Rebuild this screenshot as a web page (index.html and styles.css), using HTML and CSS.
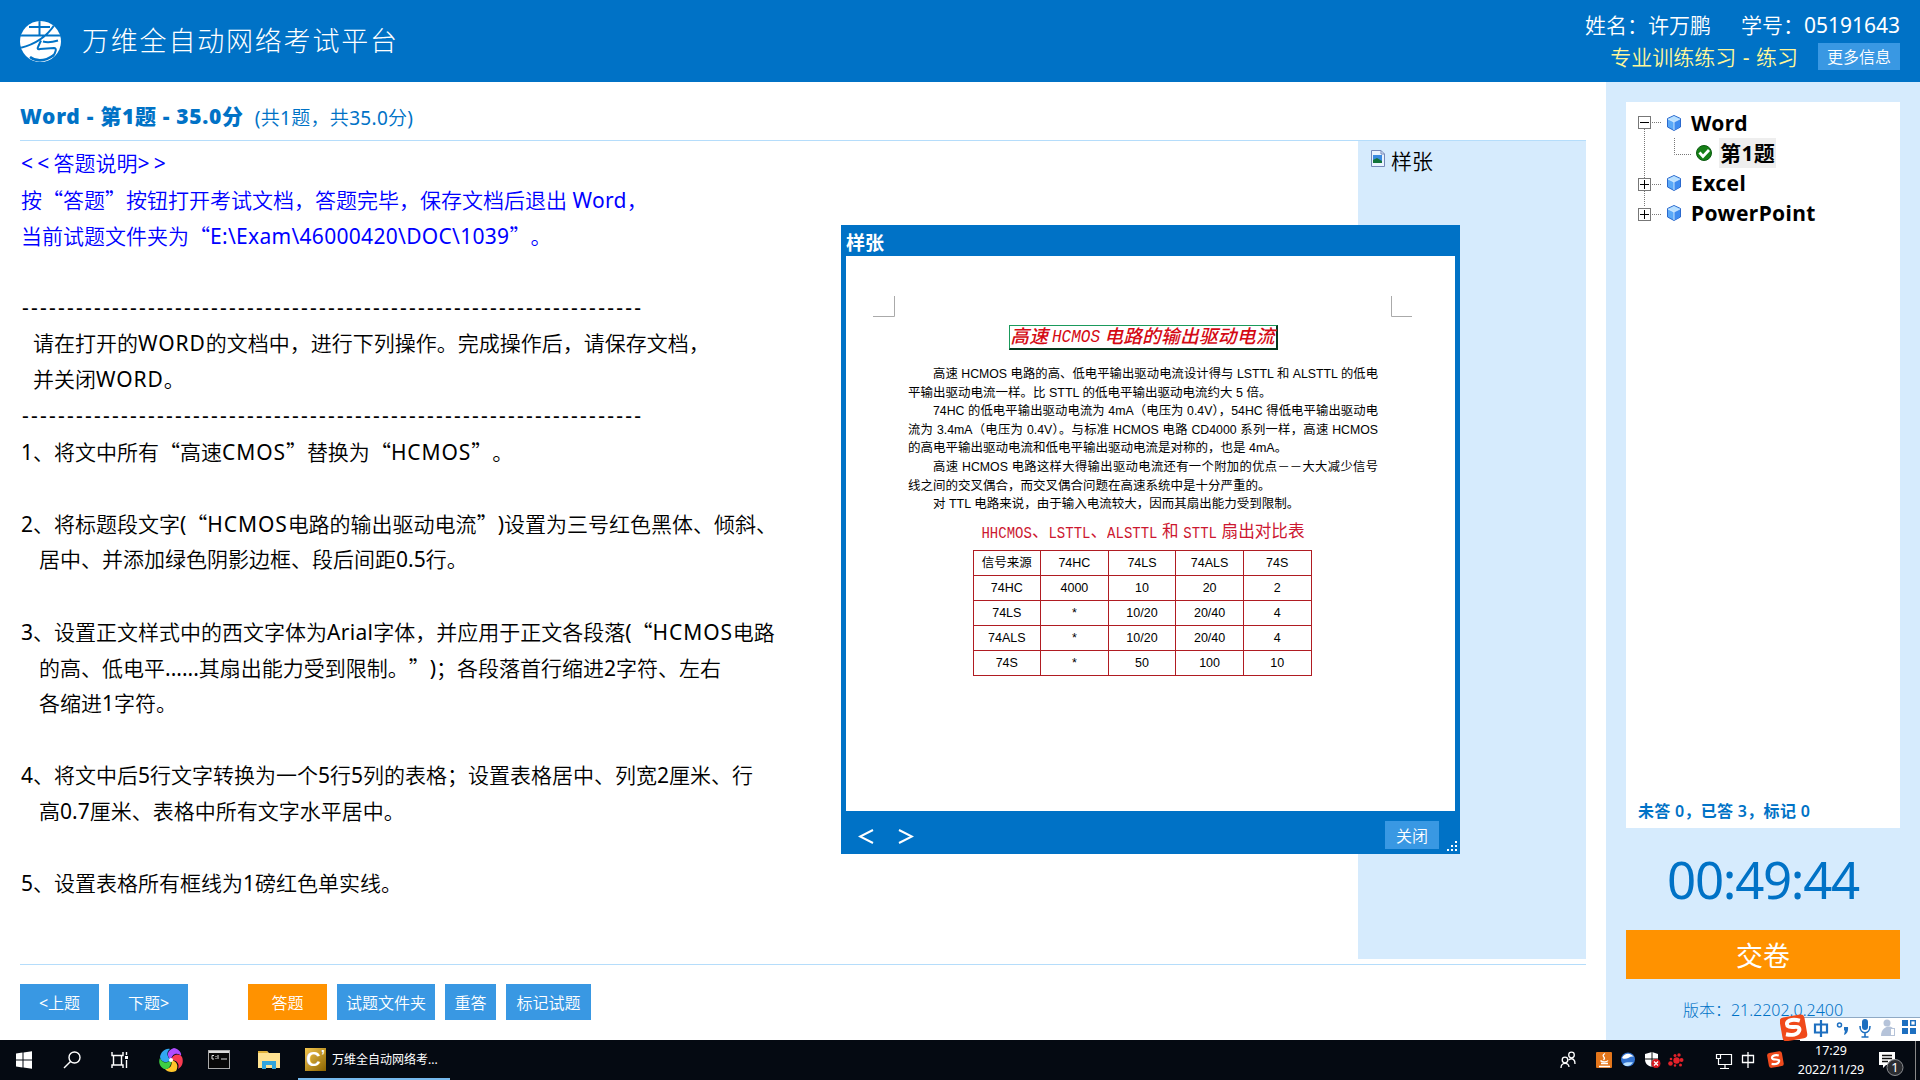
FILE: index.html
```html
<!DOCTYPE html>
<html lang="zh-CN">
<head>
<meta charset="utf-8">
<title>万维全自动网络考试平台</title>
<link rel="stylesheet" href="styles.css">
</head>
<body>
<header class="top">
  <svg class="logo" viewBox="0 0 41 41">
    <defs><clipPath id="disc"><circle cx="20.500" cy="20.500" r="20.500"/></clipPath></defs>
    <g clip-path="url(#disc)">
      <rect width="41" height="41" fill="#fff"/>
      <g fill="none" stroke="#0072c6" stroke-width="2">
        <path d="M9 6H30M0 14.500H41M19.500 0V14M35 3C28 14 17 23 0 27"/>
        <path d="M21 19.500L18 26C17 28 18 28.500 20 28L34 27C37 27 36 31 33 35M23 20.500C28 22 33 21 38 19.500"/>
        <path d="M10 36C18 42 27 39 34 34" stroke-width="2.600"/>
      </g>
    </g>
  </svg>
  <h1 class="brand">万维全自动网络考试平台</h1>
  <div class="who">
    <div class="who-row"><span>姓名：许万鹏</span><span>学号：05191643</span></div>
    <div class="who-row exam"><span>专业训练练习 - 练习</span><button class="more">更多信息</button></div>
  </div>
</header>

<div class="body">
  <main class="main">
    <h2 class="heading"><b>Word - 第1题 - 35.0分</b><span>(共1题，共35.0分)</span></h2>
    <section class="work">
      <div class="question">
        <p class="blue"><span class="angle">&lt;&lt;</span>答题说明<span class="angle">&gt;&gt;</span></p>
        <p class="blue">按<i>“</i>答题<i>”</i>按钮打开考试文档，答题完毕，保存文档后退出 <span class="path">Word</span>，</p>
        <p class="blue">当前试题文件夹为<i>“</i><span class="path">E:\Exam\46000420\DOC\1039</span><i>”</i>。</p>
        <p></p>
        <p class="dash">---------------------------------------------------------------------</p>
        <p class="in1">请在打开的<span class="caps">WORD</span>的文档中，进行下列操作。完成操作后，请保存文档，</p>
        <p class="in1">并关闭<span class="caps">WORD</span>。</p>
        <p class="dash">---------------------------------------------------------------------</p>
        <p>1、将文中所有<i>“</i>高速<span class="caps">CMOS</span><i>”</i>替换为<i>“</i><span class="caps">HCMOS</span><i>”</i>。</p>
        <p></p>
        <p>2、将标题段文字(<i>“</i><span class="caps">HCMOS</span>电路的输出驱动电流<i>”</i>)设置为三号红色黑体、倾斜、</p>
        <p class="in2">居中、并添加绿色阴影边框、段后间距0.5行。</p>
        <p></p>
        <p>3、设置正文样式中的西文字体为<span class="path">Arial</span>字体，并应用于正文各段落(<i>“</i><span class="caps">HCMOS</span>电路</p>
        <p class="in2">的高、低电平......其扇出能力受到限制。<i>”</i>)；各段落首行缩进2字符、左右</p>
        <p class="in2">各缩进1字符。</p>
        <p></p>
        <p>4、将文中后5行文字转换为一个5行5列的表格；设置表格居中、列宽2厘米、行</p>
        <p class="in2">高0.7厘米、表格中所有文字水平居中。</p>
        <p></p>
        <p>5、设置表格所有框线为1磅红色单实线。</p>
      </div>
      <aside class="sample">
        <svg width="14" height="17" viewBox="0 0 14 17"><path d="M.5.500H10L13.500 4V16.500H.5Z" fill="#eaf3ff" stroke="#7488b8"/><rect x="2" y="5" width="9" height="8" fill="#3b8be0"/><path d="M2 13V10L6 8L11 11V13Z" fill="#12733a"/><path d="M10 .5V4H13.500" fill="none" stroke="#7488b8"/></svg>
        <span>样张</span>
      </aside>
    </section>
    <footer class="actions">
      <button class="w80">&lt;上题</button><button class="w80">下题&gt;</button>
      <button class="w80 go">答题</button><button class="w98">试题文件夹</button><button class="w51">重答</button><button class="w85">标记试题</button>
    </footer>
  </main>

  <aside class="side">
    <div class="tree">
      <svg class="tree-lines" width="60" height="120" viewBox="0 0 60 120">
        <g stroke="#777" stroke-dasharray="1 1" fill="none"><path d="M6.500 27V105M14 20.500H23M36.500 36V52.500H53M14 82.500H23M14 112.500H23"/></g>
        <g fill="#fff" stroke="#777"><rect x=".5" y="14.500" width="12" height="12"/><rect x=".5" y="76.500" width="12" height="12"/><rect x=".5" y="106.500" width="12" height="12"/></g>
        <path d="M2 20.500H11M2 82.500H11M6.500 78V87M2 112.500H11M6.500 108V117" stroke="#000"/>
      </svg>
      <ul>
        <li><svg class="cube" viewBox="0 0 14 16"><use href="#cube"/></svg>Word</li>
        <li class="child"><svg class="tick" viewBox="0 0 16 16"><circle cx="8" cy="8" r="7.500" fill="#168016" stroke="#0a5a10"/><path d="M3.500 7.500L7 11.500L13 5" fill="none" stroke="#fff" stroke-width="2.800"/></svg><span class="sel">第1题</span></li>
        <li><svg class="cube" viewBox="0 0 14 16"><use href="#cube"/></svg>Excel</li>
        <li><svg class="cube" viewBox="0 0 14 16"><use href="#cube"/></svg>PowerPoint</li>
      </ul>
      <p class="counts">未答 0，已答 3，标记 0</p>
    </div>
    <div class="timer">00:49:44</div>
    <button class="submit">交卷</button>
    <p class="version">版本：21.2202.0.2400</p>
  </aside>
</div>

<nav class="taskbar">
  <svg class="tb-left" width="290" height="40" viewBox="0 0 290 40">
    <path d="M16 13.500L22.500 12.600V19.500H16ZM23.500 12.500L32 11.300V19.500H23.500ZM16 20.500H22.500V27.400L16 26.500ZM23.500 20.500H32V28.700L23.500 27.500Z" fill="#fff"/>
    <g fill="none" stroke="#fff" stroke-width="1.400"><circle cx="74.500" cy="17.500" r="5.500"/><path d="M70.500 21.500L64 28"/><path d="M112 12V15.500H123V12M112 28V25H123V28M113.500 15.500V25M121.500 15.500V25M126.500 12V15M126.500 20V28"/></g>
    <rect x="125" y="16" width="3" height="3" fill="#fff"/>
    <g transform="translate(171 20)">
      <path d="M0 0C-5 -4 -4 -10 3 -12C8 -11 11 -7 10 -4C7 -8 1 -7 0 0Z" fill="#b04dff"/>
      <path d="M0 0C2 -6 8 -7 11 -3C13 2 11 7 7 9C9 4 6 0 0 0Z" fill="#fa3b51"/>
      <path d="M0 0C6 1 8 6 5 11C1 13 -4 12 -6 9C-1 9 2 5 0 0Z" fill="#ffc62a"/>
      <path d="M0 0C1 6 -3 10 -7 9C-11 7 -13 2 -11 -2C-9 3 -4 4 0 0Z" fill="#3ecf43"/>
      <path d="M0 0C-5 4 -10 2 -11 -3C-10 -8 -6 -12 -1 -11C-5 -8 -4 -3 0 0Z" fill="#32a7f2"/>
      <circle r="2" fill="#fff"/></g>
    <rect x="208.500" y="10.500" width="21" height="18" fill="#080808" stroke="#aaa"/><path d="M209 12H229" stroke="#ddd" stroke-width="2"/><path d="M214 15.500H212V19H214M216 16V17M216 18V19M218 15V19M221 19H227" stroke="#ddd" fill="none"/>
    <path d="M258 11H267L269 13H280V28H258Z" fill="#ffe291"/><path d="M258 11H267L268 13H258Z" fill="#e0b13a"/><path d="M262 29V21H276V29H272V25H266V29Z" fill="#32a5dd"/>
  </svg>
  <div class="task">
    <span class="app">C<sup>’</sup></span>
    <span>万维全自动网络考...</span>
  </div>
  <svg class="tray" width="237" height="40" viewBox="0 0 237 40">
    <g fill="none" stroke="#fff" stroke-width="1.300"><circle cx="15" cy="20" r="2.800"/><circle cx="21.500" cy="15" r="2.800"/><path d="M11 28C11 22 19 22 19 27M18.500 20C23 17 25 20 25 24"/></g>
    <rect x="46" y="12" width="16" height="16" rx="1" fill="#e4761b"/><path d="M55 13.500C50 16.500 57 17 53.500 20M50.500 20.500C52 22.500 57 22 58 20.500M51 23.500H58M49 26.500H60" stroke="#fff" fill="none" stroke-width="1.300"/>
    <circle cx="78" cy="19.500" r="7" fill="#3272cf"/><path d="M72 18C75 12 81 13 84 17C80 15 77 21 72 18Z" fill="#fff"/><path d="M73 24C77 21 81 23 83 22C81 27 75 27 73 24Z" fill="#b7dfff"/>
    <path d="M102 13L108 15V20C108 25 105 27 102 28C98 27 95 25 95 20V15Z" fill="#fff" transform="translate(0 -1)"/><path d="M102 12V27M95 19H108" stroke="#111"/><circle cx="106" cy="23.500" r="4.500" fill="#d71920"/><path d="M104 21.500L108 25.500M108 21.500L104 25.500" stroke="#fff" stroke-width="1.300"/>
    <g fill="#e3222a"><circle cx="126.500" cy="20.500" r="3.200"/><circle cx="120.500" cy="23.500" r="2.300"/><circle cx="125" cy="15.500" r="1.500"/><circle cx="129" cy="15" r="1.700"/><circle cx="131.500" cy="20" r="2"/><circle cx="130.500" cy="25" r="1.500"/><circle cx="121" cy="19" r="1.300"/><circle cx="125" cy="25.500" r="1.200"/></g>
    <path d="M171 14.500H181.500V24.500H168.500V19M175 25V28M170 28.500H179M166.500 14.500H170.500V18.500H166.500Z" fill="none" stroke="#fff" stroke-width="1.200"/>
    <path d="M192.500 15.500H203.500V22.500H192.500ZM198 12V28" fill="none" stroke="#fff" stroke-width="1.300"/>
    <g transform="translate(218 12) rotate(-10 8 8)"><rect width="15" height="15" rx="2.500" fill="#f04a1d"/><path d="M11.500 4C7 2 3 4 5 6.500C7 8 11 7 11 9.500C10 12.500 6 12 3 11" fill="none" stroke="#fff" stroke-width="2.200"/></g>
  </svg>
  <div class="clock"><span>17:29</span><span>2022/11/29</span></div>
  <svg class="notice" width="41" height="40" viewBox="0 0 41 40"><path d="M4 12H20V25H11L8 28V25H4Z" fill="#fff"/><path d="M7 15.500H17M7 18.500H17M7 21.500H13" stroke="#111" stroke-width="1.300"/><circle cx="20" cy="27.500" r="8" fill="#2b2d31" stroke="#8b8d91"/><text x="20" y="32" text-anchor="middle" class="badge">1</text><path d="M40.500 0V40" stroke="#888"/></svg>
</nav>

<section class="dialog">
  <h3>样张</h3>
  <div class="paper">
    <svg class="crops" width="540" height="22" viewBox="0 0 540 22"><path d="M21.500 0V20.500H0M518.500 0V20.500H539" fill="none" stroke="#aaa"/></svg>
    <h4>高速<span class="mono">HCMOS</span>电路的输出驱动电流</h4>
    <div class="text">
      <p class="first full">高速 HCMOS 电路的高、低电平输出驱动电流设计得与 LSTTL 和 ALSTTL 的低电</p>
      <p>平输出驱动电流一样。比 STTL 的低电平输出驱动电流约大 5 倍。</p>
      <p class="first full">74HC 的低电平输出驱动电流为 4mA（电压为 0.4V），54HC 得低电平输出驱动电</p>
      <p class="full">流为 3.4mA（电压为 0.4V）。与标准 HCMOS 电路 CD4000 系列一样，高速 HCMOS</p>
      <p>的高电平输出驱动电流和低电平输出驱动电流是对称的，也是 4mA。</p>
      <p class="first full">高速 HCMOS 电路这样大得输出驱动电流还有一个附加的优点－－大大减少信号</p>
      <p>线之间的交叉偶合，而交叉偶合问题在高速系统中是十分严重的。</p>
      <p class="first">对 TTL 电路来说，由于输入电流较大，因而其扇出能力受到限制。</p>
    </div>
    <p class="caption"><span>HHCMOS</span>、<span>LSTTL</span>、<span>ALSTTL</span> 和 <span>STTL</span> 扇出对比表</p>
    <table>
      <tr><td>信号来源</td><td>74HC</td><td>74LS</td><td>74ALS</td><td>74S</td></tr>
      <tr><td>74HC</td><td>4000</td><td>10</td><td>20</td><td>2</td></tr>
      <tr><td>74LS</td><td>*</td><td>10/20</td><td>20/40</td><td>4</td></tr>
      <tr><td>74ALS</td><td>*</td><td>10/20</td><td>20/40</td><td>4</td></tr>
      <tr><td>74S</td><td>*</td><td>50</td><td>100</td><td>10</td></tr>
    </table>
  </div>
  <div class="dialog-foot">
    <svg width="56" height="15" viewBox="0 0 56 15"><path d="M15 1L2 7.500L15 14M41 1L54 7.500L41 14" fill="none" stroke="#fff" stroke-width="2"/></svg>
    <button>关闭</button>
  </div>
  <svg class="grip" width="10" height="10" viewBox="0 0 10 10"><path d="M8 0h2v2h-2zM4 4h2v2h-2zM8 4h2v2h-2zM0 8h2v2h-2zM4 8h2v2h-2zM8 8h2v2h-2z" fill="#fff"/></svg>
</section>

<div class="ime">
  <svg width="140" height="27" viewBox="0 0 140 27">
    <path d="M20 3.500H140V27H20Z" fill="#fff"/><path d="M20 3.500H140" stroke="#8fa9c4"/>
    <g transform="rotate(-10 13 14)"><rect x="1" y="2" width="25" height="24" rx="4" fill="#f0491a"/><path d="M21 8C13 4 6 6 8 11C11 15 20 11 19 17C17 22 10 21 5 19" fill="none" stroke="#fff" stroke-width="4"/></g>
    <path d="M35 10.500H47V18.500H35ZM41 6V23" fill="none" stroke="#1d6fc0" stroke-width="2.200"/>
    <circle cx="59.500" cy="11" r="2" fill="none" stroke="#1d6fc0" stroke-width="1.500"/><path d="M64 13H68C68.500 17 67 20 64 21L65 16.500H64Z" fill="#1d6fc0"/>
    <rect x="82" y="5" width="6" height="11" rx="3" fill="#1d6fc0"/><path d="M80 12C80 21 90 21 90 12M85 19V23M81.500 23H88.500" fill="none" stroke="#1d6fc0" stroke-width="1.600"/>
    <circle cx="107" cy="9" r="3.500" fill="#b5c3d9"/><path d="M101 22C101 11 113 11 113 15V22Z" fill="#b5c3d9"/><rect x="110.500" y="14.500" width="4" height="7" fill="#fff" stroke="#b5c3d9"/>
    <path d="M122 6h6v6h-6zM122 14h6v6h-6zM130 14h6v6h-6z" fill="#1d6fc0"/><rect x="130.700" y="6.700" width="4.600" height="4.600" fill="none" stroke="#1d6fc0" stroke-width="1.400"/>
  </svg>
</div>

<svg width="0" height="0" class="defs"><defs><g id="cube"><path d="M7 .5L13.500 3.500V12L7 15.500L.5 12V3.500Z" fill="#5aa9f8" stroke="#2b68cc"/><path d="M7 1L13 4L7 7L1 4Z" fill="#b9e0ff"/><path d="M7 7L13 4V12L7 15Z" fill="#3f8cf0"/><path d="M7 7V15M7 7L1 4M7 7L13 4" stroke="#e4f4ff" stroke-width=".8"/></g></defs></svg>
</body>
</html>
```
FILE: styles.css
```css
* { box-sizing: border-box; margin: 0; padding: 0; }
html { text-spacing-trim: space-all; }
body {
  width: 1920px; height: 1080px; overflow: hidden; position: relative;
  display: flex; flex-direction: column; background: #fff; color: #000;
  font-family: "Noto Sans", "Noto Sans CJK SC", sans-serif; font-size: 21px;
  white-space: nowrap;
}
button { border: 0; background: #3998e3; color: #fff; font-family: inherit; white-space: nowrap; }
svg { display: block; flex: none; }
i { font-style: normal; font-family: "Noto Sans CJK SC DemiLight", "Noto Sans CJK SC", sans-serif; }
.who, .heading span, .question, .sample, .actions button, .more, .dialog-foot button {
  font-family: "Noto Sans", "Noto Sans CJK SC DemiLight", "Noto Sans CJK SC", sans-serif; font-weight: 400;
}

.top { height: 82px; flex: none; background: #0072c6; color: #fff; display: flex; align-items: center; padding: 0 20px; }
.logo { width: 41px; height: 41px; }
.brand { margin-left: 21px; font-size: 27px; font-weight: 300; letter-spacing: 1.800px; padding-bottom: 3px; }
.who { margin-left: auto; display: flex; flex-direction: column; align-items: flex-end; gap: 4px; margin-top: -2px; }
.who-row { display: flex; align-items: center; height: 28px; gap: 30px; }
.who-row.exam { color: #fff799; gap: 20px; word-spacing: 1px; }
.more { width: 82px; height: 27px; font-size: 16px; }

.body { flex: 1; display: flex; min-height: 0; }
.main { width: 1606px; padding: 0 20px; display: flex; flex-direction: column; }
.heading { height: 59px; border-bottom: 1px solid #b5ddfb; display: flex; align-items: center; gap: 11px; padding-top: 9px; color: #0072c6; font-size: 21px; }
.heading b { letter-spacing: .7px; padding-bottom: 1px; }
.heading span { font-size: 19px; letter-spacing: .3px; padding-top: 2px; }
.work { height: 818px; display: flex; justify-content: space-between; }
.question { padding: 4px 0 0 1px; }
.question p { height: 36px; line-height: 36px; }
.question .blue { color: #0000ff; }
.angle { letter-spacing: 4.200px; }
.path { letter-spacing: .3px; }
.caps { letter-spacing: .9px; }
.question .dash { letter-spacing: 2.240px; padding-left: 1px; }
.question .in1 { padding-left: 12px; }
.question .in2 { padding-left: 18px; }
.sample { width: 228px; background: #d6ebfd; padding: 9px 13px; display: flex; align-items: flex-start; gap: 6px; line-height: 22px; }
.actions { margin-top: 5px; border-top: 1px solid #b5ddfb; padding-top: 19px; display: flex; gap: 10px; }
.actions button { height: 36px; font-size: 16px; }
.w80 { width: 79px; }
.w98 { width: 98px; }
.w51 { width: 51px; }
.w85 { width: 85px; }
.actions .go { background: #ff9200; margin-left: 50px; }

.side { width: 314px; background: #d6ebfd; padding: 20px 20px 0; color: #0072c6; display: flex; flex-direction: column; }
.tree { height: 726px; flex: none; background: #fff; position: relative; padding: 6px 12px; display: flex; flex-direction: column; }
.tree-lines { position: absolute; left: 12px; top: 0; }
.tree ul { list-style: none; position: relative; color: #000; font-weight: 700; font-size: 21px; letter-spacing: .4px; }
.tree li { height: 30px; display: flex; align-items: center; gap: 10px; padding-left: 29px; }
.tree .child { padding-left: 58px; gap: 7px; }
.cube { width: 14px; height: 16px; }
.tick { width: 16px; height: 16px; }
.sel { background: #eee; height: 30px; line-height: 30px; padding: 0 1px; }
.counts { margin-top: auto; font-size: 16px; font-weight: 600; line-height: 22px; letter-spacing: .3px; }
.timer { height: 102px; line-height: 102px; flex: none; text-align: center; font-size: 51px; letter-spacing: -1.300px; font-weight: 400; }
.submit { height: 49px; flex: none; background: #ff9200; font-size: 27px; }
.version { text-align: center; font-size: 16px; font-weight: 300; line-height: 24px; margin-top: 19px; }

.taskbar { height: 40px; flex: none; background: #050a12; color: #fff; display: flex; }
.task { margin-left: 8px; width: 152px; border-bottom: 2px solid #76b9ed; display: flex; align-items: center; gap: 6px; padding-left: 7px; font-size: 12px; }
.app { width: 21px; height: 23px; background: linear-gradient(135deg, #f3c64e, #8a6200); font: bold 20px/23px "Liberation Sans", sans-serif; text-align: center; position: relative; padding-right: 4px; }
.app sup { position: absolute; right: 1px; top: -1px; font-size: 14px; line-height: 16px; }
.tray { margin-left: auto; }
.clock { width: 88px; display: flex; flex-direction: column; align-items: center; font-size: 12.500px; line-height: 19px; padding-top: 1px; }
.notice { margin-right: 4px; }
.badge { font-size: 13px; fill: #fff; }

.dialog { position: absolute; left: 841px; top: 225px; width: 619px; height: 629px; background: #0072c6; padding: 0 5px; display: flex; flex-direction: column; }
.dialog h3 { height: 31px; line-height: 36px; font-size: 19px; color: #fff; }
.paper { height: 555px; background: #fff; padding: 40px 42px 0 27px; display: flex; flex-direction: column; align-items: center; font-family: "Liberation Sans", "Noto Sans CJK SC", sans-serif; }
.crops { align-self: flex-start; }
.paper h4 { margin-top: 7px; width: 269px; height: 25px; line-height: 22px; border: 1px solid #1a9a5c; border-right: 2px solid #04361c; border-bottom: 2px solid #04361c; color: #d40a14; font-size: 18.700px; letter-spacing: .25px; font-weight: 500; font-style: italic; display: flex; justify-content: center; }
.mono { font-family: "Liberation Mono", monospace; letter-spacing: 0; display: inline-block; transform: scaleX(.86); }
.text { width: 470px; margin-top: 15px; font-size: 12.500px; text-spacing-trim: normal; }
.text p { height: 18.600px; line-height: 18.600px; }
.text .first { padding-left: 25px; }
.text .full { text-align-last: justify; font-size: 12.300px; }
.caption { margin-top: 7px; height: 22px; line-height: 22px; color: #cc1730; font-size: 16.600px; }
.caption span { font-family: "Liberation Mono", monospace; font-size: 14px; display: inline-block; transform: scaleY(1.15); }
.paper table { margin: 7px 2px 0 0; border-collapse: collapse; table-layout: fixed; width: 339px; font-size: 12.500px; }
.paper td { border: 1px solid #b01c22; height: 25px; text-align: center; line-height: 20px; }
.dialog-foot { flex: 1; display: flex; justify-content: space-between; align-items: flex-start; padding: 10px 16px 0 12px; }
.dialog-foot svg { margin-top: 8px; }
.dialog-foot button { width: 54px; height: 28px; font-size: 16px; }
.grip { position: absolute; right: 3px; bottom: 3px; }
.ime { position: absolute; left: 1780px; top: 1014px; }
.defs { position: absolute; }
```
